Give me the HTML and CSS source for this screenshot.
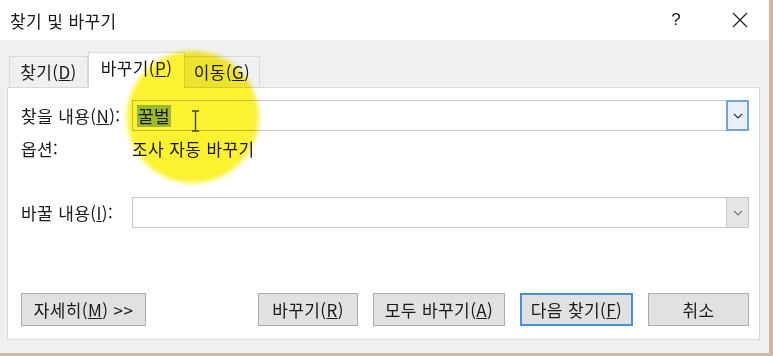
FILE: index.html
```html
<!DOCTYPE html>
<html lang="ko">
<head>
    <meta charset="UTF-8">
    <title>찾기 및 바꾸기</title>
    <link rel="stylesheet" href="styles.css">
</head>
<body>
    <div class="window">
        <div class="titlebar">
            <span class="title">찾기 및 바꾸기</span>
            <span class="help">?</span>
            <svg class="close" width="16" height="16" viewBox="0 0 16 16">
                <path d="M1 1 L15 15 M15 1 L1 15" stroke="#222" stroke-width="1.3" fill="none"/>
            </svg>
        </div>

        <div class="content">
            <div class="tabs">
                <div class="tab">찾기(<u>D</u>)</div>
                <div class="tab active">바꾸기(<u>P</u>)</div>
                <div class="tab">이동(<u>G</u>)</div>
            </div>

            <div class="panel">
                <div class="row find-row">
                    <label class="label">찾을 내용(<u>N</u>):</label>
                    <div class="combo">
                        <div class="field"><span class="selected">꿀벌</span></div>
                        <div class="drop focus">
                            <svg width="10" height="6" viewBox="0 0 10 6"><polyline points="1,1 5,5 9,1" fill="none" stroke="#333" stroke-width="1.2"/></svg>
                        </div>
                    </div>
                </div>

                <div class="row options-row">
                    <span class="label">옵션:</span>
                    <span>조사 자동 바꾸기</span>
                </div>

                <div class="row replace-row">
                    <label class="label">바꿀 내용(<u>I</u>):</label>
                    <div class="combo">
                        <div class="field"></div>
                        <div class="drop">
                            <svg width="10" height="6" viewBox="0 0 10 6"><polyline points="1,1 5,5 9,1" fill="none" stroke="#777" stroke-width="1.2"/></svg>
                        </div>
                    </div>
                </div>

                <div class="buttons">
                    <button class="btn more">자세히(<u>M</u>) &gt;&gt;</button>
                    <div class="spacer"></div>
                    <button class="btn w-replace">바꾸기(<u>R</u>)</button>
                    <button class="btn w-all">모두 바꾸기(<u>A</u>)</button>
                    <button class="btn w-next default">다음 찾기(<u>F</u>)</button>
                    <button class="btn w-cancel">취소</button>
                </div>
            </div>
        </div>

        <!-- screen recorder cursor highlight -->
        <div class="spot"></div>
        <svg class="ibeam" width="9" height="22" viewBox="0 0 9 22">
            <path d="M1 1 H8 M4.5 1 V21 M1 21 H8" stroke="#444" stroke-width="1.4" fill="none"/>
        </svg>
    </div>
</body>
</html>
```

FILE: styles.css
```css
body {
    margin: 0;
    width: 773px;
    height: 356px;
    background: #cbb6a8;
    font-family: "Noto Sans CJK KR", "Noto Sans", sans-serif;
    font-size: 17px;
    letter-spacing: 0.4px;
    color: #1a1a1a;
    overflow: hidden;
}
.window {
    position: relative;
    width: 769px;
    height: 353px;
    background: #f0f0f0;
    overflow: hidden;
}
.titlebar {
    height: 40px;
    background: #fff;
    display: flex;
    align-items: center;
    padding-left: 10px;
}
.title {
    font-size: 17px;
    flex: 1;
}
.help {
    font-family: "Liberation Sans", sans-serif;
    font-size: 17px;
    margin-right: 51px;
}
.close {
    margin-right: 21px;
}
.content {
    padding: 12px 9px 0 7px;
}
.tabs {
    display: flex;
    align-items: flex-end;
    padding-left: 2px;
    height: 35px;
}
.tab {
    height: 30px;
    box-sizing: border-box;
    border: 1px solid #d9d9d9;
    border-bottom: none;
    background: #f0f0f0;
    display: flex;
    align-items: center;
    justify-content: center;
    margin-bottom: 1px;
}
.tab:nth-child(1) { width: 79px; }
.tab:nth-child(3) { width: 75px; border-left: none; }
.tab.active {
    width: 97px;
    height: 36px;
    background: #fff;
    margin-bottom: -1px;
    padding-bottom: 6px;
    position: relative;
    z-index: 1;
}
.panel {
    height: 253px;
    box-sizing: border-box;
    background: #fff;
    border: 1px solid #d9d9d9;
    padding: 12px 10px 0 13px;
}
.row {
    display: flex;
    align-items: center;
}
.label {
    width: 111px;
    flex: none;
}
.find-row { height: 31px; }
.options-row {
    height: 19px;
    margin-top: 8px;
}
.replace-row {
    height: 31px;
    margin-top: 39px;
}
.combo {
    display: flex;
    width: 617px;
    height: 31px;
    box-sizing: border-box;
    border: 1px solid #c6c6c6;
}
.field {
    flex: 1;
    display: flex;
    align-items: center;
    padding-left: 4px;
}
.selected {
    background: #9cc2f2;
    padding: 0 1px;
    line-height: 22px;
}
.drop {
    width: 23px;
    margin: -1px -1px -1px 0;
    box-sizing: border-box;
    border: 1px solid #c6c6c6;
    background: #e6e6e6;
    display: flex;
    align-items: center;
    justify-content: center;
}
.drop.focus {
    border: 2px solid #6fa4dc;
    background: #e8f1fb;
}
.buttons {
    display: flex;
    gap: 15px;
    margin-top: 65px;
}
.spacer {
    flex: 1;
    margin-left: -15px;
}
.btn {
    height: 33px;
    box-sizing: border-box;
    border: 1px solid #adadad;
    background: #e1e1e1;
    font-family: inherit;
    font-size: 17px;
    letter-spacing: 0.4px;
    color: #1a1a1a;
    padding: 0;
}
.more { width: 125px; }
.w-replace { width: 100px; }
.w-all { width: 132px; }
.w-next { width: 113px; }
.w-cancel { width: 101px; }
.btn.default {
    border: 2px solid #4a8fd6;
}
.spot {
    position: absolute;
    left: 127px;
    top: 51px;
    width: 132px;
    height: 132px;
    border-radius: 50%;
    background: rgb(252, 242, 50);
    mix-blend-mode: multiply;
    filter: blur(2px);
    z-index: 5;
}
.ibeam {
    position: absolute;
    left: 191px;
    top: 110px;
    z-index: 6;
}
```
